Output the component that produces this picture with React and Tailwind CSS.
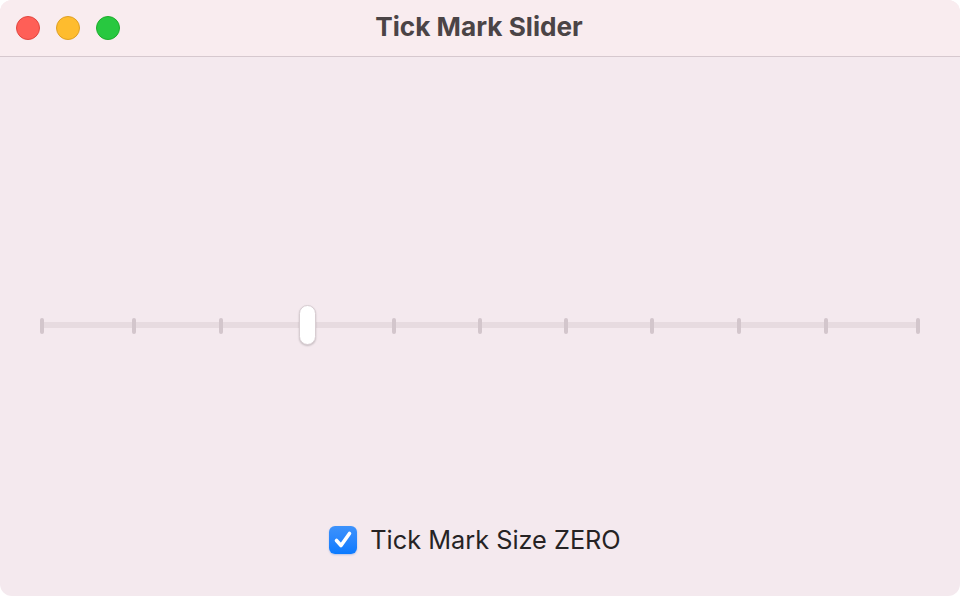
import React from "react";

// tick centres measured from the window's left edge
const tickCentres = [42, 134, 221, 307, 394, 480, 566, 652, 739, 826, 918];

function TrafficLights() {
  return (
    <div className="flex items-center gap-[16px] pl-[16px]">
      <span className="h-[24px] w-[24px] rounded-full border border-[#e2463f] bg-[#ff5f57]" />
      <span className="h-[24px] w-[24px] rounded-full border border-[#dfa023] bg-[#febc2e]" />
      <span className="h-[24px] w-[24px] rounded-full border border-[#1dad2b] bg-[#28c840]" />
    </div>
  );
}

function TickSlider() {
  return (
    <div className="px-[40px]">
      <div className="relative h-[40px]">
        <div className="absolute left-[2px] right-[2px] top-[17px] h-[6px] bg-[#e7dbe0]" />
        {tickCentres.map((c) => (
          <div
            key={c}
            className="absolute top-[13px] h-[16px] w-[4px] rounded-[2px] bg-[#d3c6cc]"
            style={{ left: `${c - 42}px` }}
          />
        ))}
        <div className="absolute left-[259px] top-0 h-[40px] w-[17px] rounded-full border border-[#d8cdd2] bg-white shadow-[0_1px_2px_rgba(0,0,0,0.2)]" />
      </div>
    </div>
  );
}

function CheckBox() {
  return (
    <div className="flex h-[28px] w-[28px] items-center justify-center rounded-[6px] bg-gradient-to-b from-[#3d92fb] to-[#087aff] shadow-[0_1px_2px_rgba(0,80,200,0.25)]">
      <svg width="22" height="22" viewBox="0 0 22 22" fill="none">
        <path d="M4.5 11.5 L9 16.5 L17.5 4.5" stroke="white" strokeWidth="3.6" strokeLinecap="round" strokeLinejoin="round" />
      </svg>
    </div>
  );
}

export default function App() {
  return (
    <div className="h-[596px] w-[960px] bg-white" style={{ fontFamily: "Inter, 'Noto Sans', sans-serif" }}>
      <div className="flex h-full w-full flex-col overflow-hidden rounded-[12px] bg-[#f4e9ee]">
        <div className="relative flex h-[57px] items-center border-b border-[#d6c8ce] bg-[#f9ecef]">
          <TrafficLights />
          <div className="absolute inset-0 flex items-center justify-center pb-[2px] pr-[2px] text-[26.2px] font-bold text-[#4b4446]">
            Tick Mark Slider
          </div>
        </div>
        <div className="flex flex-1 flex-col pt-[248px]">
          <TickSlider />
          <div className="mt-[181px] flex items-center justify-center gap-[13px] pr-[10px]">
            <CheckBox />
            <span className="text-[25.3px] leading-[28px] text-[#262324]">Tick Mark Size ZERO</span>
          </div>
        </div>
      </div>
    </div>
  );
}
